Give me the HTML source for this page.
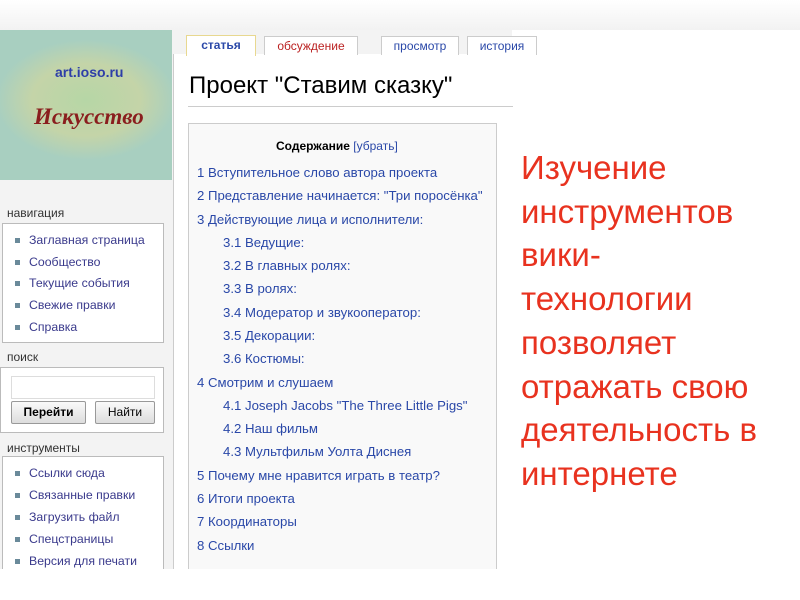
<!DOCTYPE html>
<html><head><meta charset="utf-8"><style>
body{margin:0;width:800px;height:600px;background:#fff;position:relative;overflow:hidden;font-family:"Liberation Sans",Arial,sans-serif}
.a{position:absolute}
.shot{left:0;top:28px;width:512px;height:542px;background:#f3f3f3;overflow:hidden}
.logo{left:0;top:30px;width:172px;height:150px;background:radial-gradient(ellipse 90px 60px at 86px 70px,#b6d6a6 0%,#c4d4a8 60%,#a8cfc0 100%);}
.sb{font-size:12px;color:#333}
.box{background:#fff;border:1px solid #bbb}
.li{font-size:12.3px;color:#3a3a8c;position:absolute;left:12px}
.li:before{content:"";position:absolute;left:0;top:5px;width:5px;height:5px;background:#6a8a9a}
.li span{margin-left:14px}
.toc div{position:absolute;font-size:13.2px;color:#2a48a8;white-space:nowrap}
.red{left:521px;top:146px;font-size:33px;line-height:43.7px;color:#e8321f}
.tab{top:36px;height:18px;background:#fff;border:1px solid #ccc;border-bottom:none;font-size:12px;text-align:center;line-height:18px;color:#2a48a8}
</style></head><body>
<div class="a shot"></div>
<div class="a" style="left:0;top:0;width:800px;height:30px;background:linear-gradient(#fff,#f2f2f2)"></div>
<div class="a logo">
<div class="a" style="left:55px;top:34px;font-size:14px;font-weight:bold;color:#2d3ea8">art.ioso.ru</div>
<div class="a" style="left:34px;top:74px;font-size:23px;font-weight:bold;font-style:italic;font-family:'Liberation Serif',serif;color:#8a1e1e">Искусство</div>
</div>
<div class="a" style="left:173px;top:54px;width:340px;height:516px;background:#fff;border-left:1px solid #ccc"></div>
<div class="a tab" style="left:186px;width:68px;top:35px;height:20px;border-color:#e8d890;font-weight:bold">статья</div>
<div class="a tab" style="left:264px;width:92px;color:#b22">обсуждение</div>
<div class="a tab" style="left:381px;width:76px">просмотр</div>
<div class="a tab" style="left:467px;width:68px">история</div>
<div class="a" style="left:189px;top:72px;font-size:24px;color:#000">Проект "Ставим сказку"</div>
<div class="a" style="left:188px;top:106px;width:325px;height:1px;background:#ccc"></div>
<div class="a" style="left:188px;top:123px;width:307px;height:447px;background:#f9f9f9;border:1px solid #ccc"></div>
<div class="a" style="left:276px;top:139px;font-size:12px;font-weight:bold;color:#000">Содержание <span style="font-weight:normal;color:#2a48a8">[убрать]</span></div>
<div class="toc">
<div style="left:197px;top:165px">1 Вступительное слово автора проекта</div>
<div style="left:197px;top:188px">2 Представление начинается: "Три поросёнка"</div>
<div style="left:197px;top:212px">3 Действующие лица и исполнители:</div>
<div style="left:223px;top:235px">3.1 Ведущие:</div>
<div style="left:223px;top:258px">3.2 В главных ролях:</div>
<div style="left:223px;top:281px">3.3 В ролях:</div>
<div style="left:223px;top:305px">3.4 Модератор и звукооператор:</div>
<div style="left:223px;top:328px">3.5 Декорации:</div>
<div style="left:223px;top:351px">3.6 Костюмы:</div>
<div style="left:197px;top:375px">4 Смотрим и слушаем</div>
<div style="left:223px;top:398px">4.1 Joseph Jacobs "The Three Little Pigs"</div>
<div style="left:223px;top:421px">4.2 Наш фильм</div>
<div style="left:223px;top:444px">4.3 Мультфильм Уолта Диснея</div>
<div style="left:197px;top:468px">5 Почему мне нравится играть в театр?</div>
<div style="left:197px;top:491px">6 Итоги проекта</div>
<div style="left:197px;top:514px">7 Координаторы</div>
<div style="left:197px;top:538px">8 Ссылки</div>
</div>
<div class="a sb" style="left:7px;top:206px">навигация</div>
<div class="a box" style="left:2px;top:223px;width:160px;height:118px">
<div class="li" style="top:9px"><span>Заглавная страница</span></div>
<div class="li" style="top:31px"><span>Сообщество</span></div>
<div class="li" style="top:52px"><span>Текущие события</span></div>
<div class="li" style="top:74px"><span>Свежие правки</span></div>
<div class="li" style="top:96px"><span>Справка</span></div>
</div>
<div class="a sb" style="left:7px;top:350px">поиск</div>
<div class="a box" style="left:0;top:367px;width:162px;height:64px">
<div class="a" style="left:10px;top:8px;width:142px;height:21px;background:#fff;border:1px solid #ddd"></div>
<div class="a" style="left:10px;top:33px;width:73px;height:21px;background:linear-gradient(#fafafa,#ddd);border:1px solid #999;border-radius:2px;font-size:12px;font-weight:bold;text-align:center;line-height:21px">Перейти</div>
<div class="a" style="left:94px;top:33px;width:58px;height:21px;background:linear-gradient(#fafafa,#ddd);border:1px solid #999;border-radius:2px;font-size:12px;text-align:center;line-height:21px">Найти</div>
</div>
<div class="a sb" style="left:7px;top:441px">инструменты</div>
<div class="a box" style="left:2px;top:456px;width:160px;height:116px;border-bottom:none">
<div class="li" style="top:9px"><span>Ссылки сюда</span></div>
<div class="li" style="top:31px"><span>Связанные правки</span></div>
<div class="li" style="top:53px"><span>Загрузить файл</span></div>
<div class="li" style="top:75px"><span>Спецстраницы</span></div>
<div class="li" style="top:97px"><span>Версия для печати</span></div>
</div>
<div class="a" style="left:0;top:569px;width:800px;height:31px;background:#fff"></div>
<div class="a red">Изучение<br>инструментов<br>вики-<br>технологии<br>позволяет<br>отражать свою<br>деятельность в<br>интернете</div>
</body></html>
